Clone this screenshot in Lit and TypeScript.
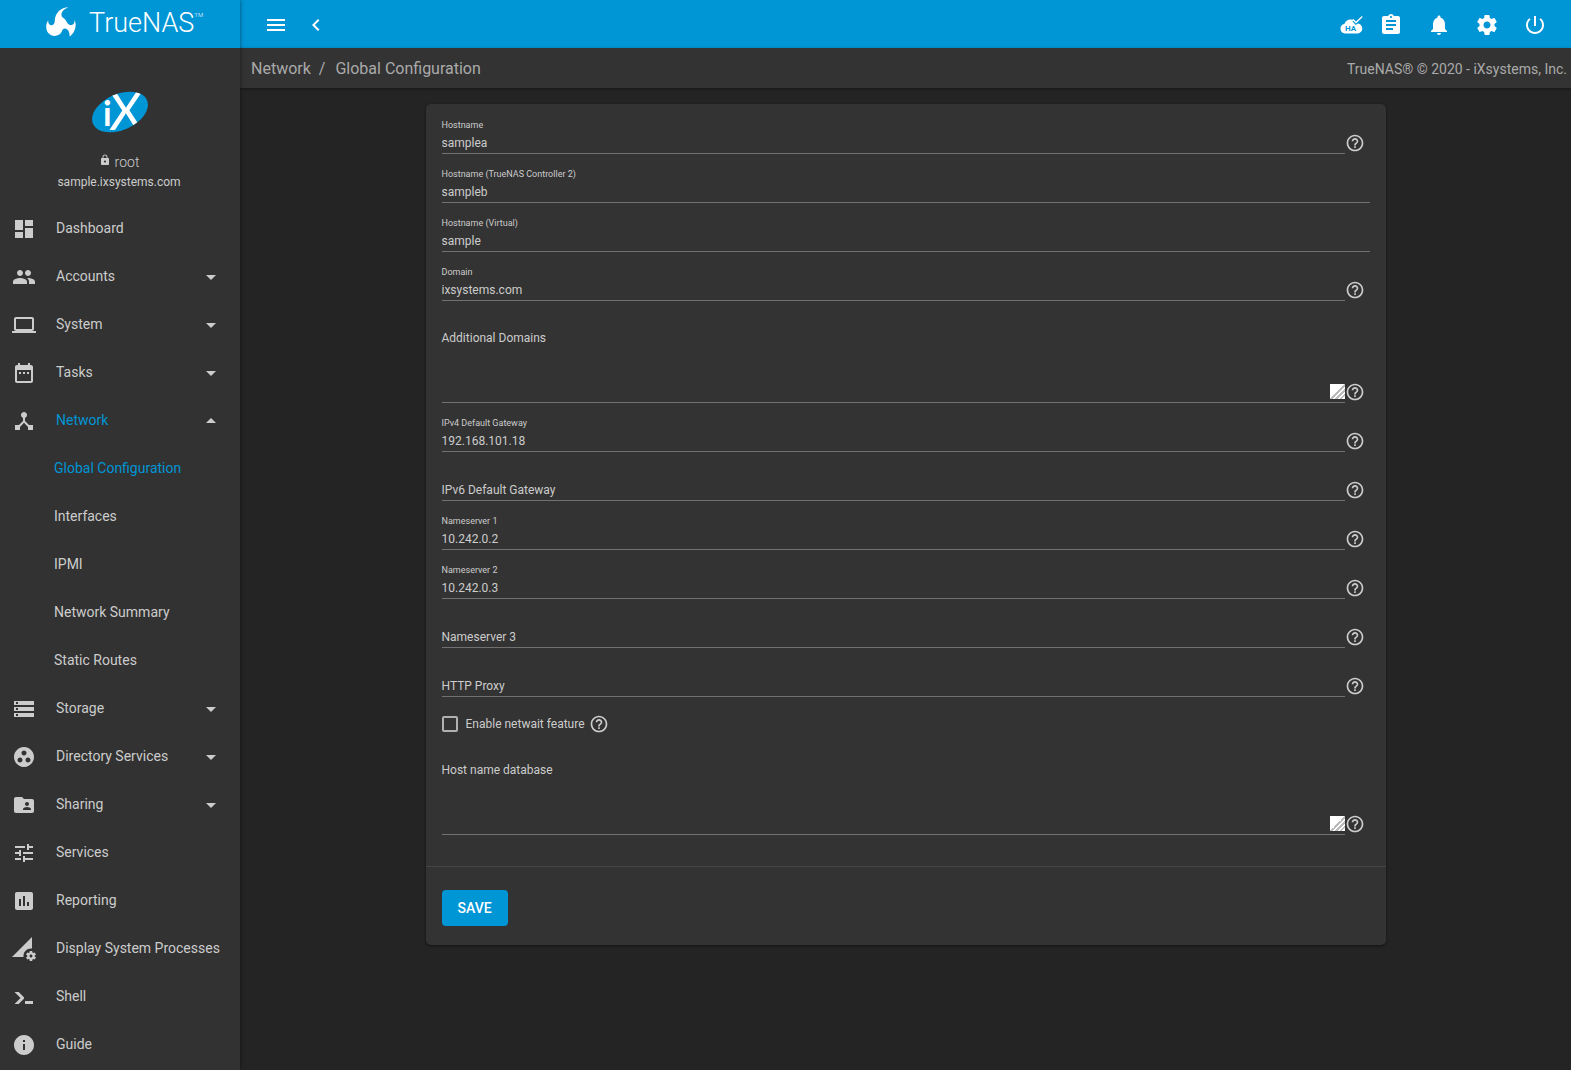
import { LitElement, html, svg, css, nothing } from "lit";
import { customElement, property } from "lit/decorators.js";

const ICONS: Record<string, string> = {
  menu: "M3 18h18v-2H3v2zm0-5h18v-2H3v2zm0-7v2h18V6H3z",
  chevron: "M15.41 7.41L14 6l-6 6 6 6 1.41-1.41L10.83 12z",
  assignment:
    "M19 3h-4.18C14.4 1.84 13.3 1 12 1c-1.3 0-2.4.84-2.82 2H5c-1.1 0-2 .9-2 2v14c0 1.1.9 2 2 2h14c1.1 0 2-.9 2-2V5c0-1.1-.9-2-2-2zm-7 0c.55 0 1 .45 1 1s-.45 1-1 1-1-.45-1-1 .45-1 1-1zm2 14H7v-2h7v2zm3-4H7v-2h10v2zm0-4H7V7h10v2z",
  bell: "M12 22c1.1 0 2-.9 2-2h-4c0 1.1.89 2 2 2zm6-6v-5c0-3.07-1.64-5.64-4.5-6.32V4c0-.83-.67-1.5-1.5-1.5s-1.5.67-1.5 1.5v.68C7.63 5.36 6 7.92 6 11v5l-2 2v1h16v-1l-2-2z",
  settings:
    "M19.43 12.98c.04-.32.07-.64.07-.98s-.03-.66-.07-.98l2.11-1.65c.19-.15.24-.42.12-.64l-2-3.46c-.12-.22-.39-.3-.61-.22l-2.49 1c-.52-.4-1.08-.73-1.69-.98l-.38-2.65C14.46 2.18 14.25 2 14 2h-4c-.25 0-.46.18-.49.42l-.38 2.65c-.61.25-1.17.59-1.69.98l-2.49-1c-.23-.09-.49 0-.61.22l-2 3.46c-.13.22-.07.49.12.64l2.11 1.65c-.04.32-.07.65-.07.98s.03.66.07.98l-2.11 1.65c-.19.15-.24.42-.12.64l2 3.46c.12.22.39.3.61.22l2.49-1c.52.4 1.08.73 1.69.98l.38 2.65c.03.24.24.42.49.42h4c.25 0 .46-.18.49-.42l.38-2.65c.61-.25 1.17-.59 1.69-.98l2.49 1c.23.09.49 0 .61-.22l2-3.46c.12-.22.07-.49-.12-.64l-2.11-1.65zM12 15.5c-1.93 0-3.5-1.57-3.5-3.5s1.57-3.5 3.5-3.5 3.5 1.57 3.5 3.5-1.57 3.5-3.5 3.5z",
  power:
    "M13 3h-2v10h2V3zm4.83 2.17l-1.42 1.42C17.99 7.86 19 9.81 19 12c0 3.87-3.13 7-7 7s-7-3.13-7-7c0-2.19 1.01-4.14 2.58-5.42L6.17 5.17C4.23 6.82 3 9.26 3 12c0 4.97 4.03 9 9 9s9-4.03 9-9c0-2.74-1.23-5.18-3.17-6.83z",
  lock: "M18 8h-1V6c0-2.76-2.24-5-5-5S7 3.24 7 6v2H6c-1.1 0-2 .9-2 2v10c0 1.1.9 2 2 2h12c1.1 0 2-.9 2-2V10c0-1.1-.9-2-2-2zm-6 9c-1.1 0-2-.9-2-2s.9-2 2-2 2 .9 2 2-.9 2-2 2zm3.1-9H8.9V6c0-1.71 1.39-3.1 3.1-3.1 1.71 0 3.1 1.39 3.1 3.1v2z",
  help: "M11 18h2v-2h-2v2zm1-16C6.48 2 2 6.48 2 12s4.48 10 10 10 10-4.48 10-10S17.52 2 12 2zm0 18c-4.41 0-8-3.59-8-8s3.59-8 8-8 8 3.59 8 8-3.59 8-8 8zm0-14c-2.21 0-4 1.79-4 4h2c0-1.1.9-2 2-2s2 .9 2 2c0 2-3 1.75-3 5h2c0-2.25 3-2.5 3-5 0-2.21-1.79-4-4-4z",
  down: "M7 10l5 5 5-5z",
  up: "M7 14l5-5 5 5z",
  dashboard: "M3 13h8V3H3v10zm0 8h8v-6H3v6zm10 0h8V11h-8v10zm0-18v6h8V3h-8z",
  group:
    "M16 11c1.66 0 2.99-1.34 2.99-3S17.66 5 16 5c-1.66 0-3 1.34-3 3s1.34 3 3 3zm-8 0c1.66 0 2.99-1.34 2.99-3S9.66 5 8 5C6.34 5 5 6.34 5 8s1.34 3 3 3zm0 2c-2.33 0-7 1.17-7 3.5V19h14v-2.5C15 14.17 10.33 13 8 13zm8 0c-.29 0-.62.02-.97.05 1.16.84 1.97 1.97 1.97 3.45V19h6v-2.5c0-2.33-4.67-3.5-7-3.5z",
  laptop:
    "M20 18c1.1 0 1.99-.9 1.99-2L22 6c0-1.1-.9-2-2-2H4c-1.1 0-2 .9-2 2v10c0 1.1.9 2 2 2H0v2h24v-2h-4zM4 6h16v10H4V6z",
  calendar:
    "M9 11H7v2h2v-2zm4 0h-2v2h2v-2zm4 0h-2v2h2v-2zm2-7h-1V2h-2v2H8V2H6v2H5c-1.11 0-1.99.9-1.99 2L3 20c0 1.1.89 2 2 2h14c1.1 0 2-.9 2-2V6c0-1.1-.9-2-2-2zm0 16H5V9h14v11z",
  hub: "M17 16l-4-4V8.82C14.16 8.4 15 7.3 15 6c0-1.66-1.34-3-3-3S9 4.34 9 6c0 1.3.84 2.4 2 2.82V12l-4 4H3v5h5v-3.05l4-4.2 4 4.2V21h5v-5h-4z",
  storage:
    "M2 20h20v-4H2v4zm2-3h2v2H4v-2zM2 4v4h20V4H2zm4 3H4V5h2v2zm-4 7h20v-4H2v4zm2-3h2v2H4v-2z",
  directory:
    "M12 2C6.48 2 2 6.48 2 12s4.48 10 10 10 10-4.48 10-10S17.52 2 12 2zM8 17.5c-1.38 0-2.5-1.12-2.5-2.5s1.12-2.5 2.5-2.5 2.5 1.12 2.5 2.5-1.12 2.5-2.5 2.5zM9.5 8c0-1.38 1.12-2.5 2.5-2.5s2.5 1.12 2.5 2.5-1.12 2.5-2.5 2.5S9.5 9.38 9.5 8zm6.5 9.5c-1.38 0-2.5-1.12-2.5-2.5s1.12-2.5 2.5-2.5 2.5 1.12 2.5 2.5-1.12 2.5-2.5 2.5z",
  sharing:
    "M20 6h-8l-2-2H4c-1.1 0-1.99.9-1.99 2L2 18c0 1.1.9 2 2 2h16c1.1 0 2-.9 2-2V8c0-1.1-.9-2-2-2zm-5 3c1.1 0 2 .9 2 2s-.9 2-2 2-2-.9-2-2 .9-2 2-2zm4 8h-8v-1c0-1.33 2.67-2 4-2s4 .67 4 2v1z",
  tune: "M3 17v2h6v-2H3zM3 5v2h10V5H3zm10 16v-2h8v-2h-8v-2h-2v6h2zM7 9v2H3v2h4v2h2V9H7zm14 4v-2H11v2h10zm-6-4h2V7h4V5h-4V3h-2v6z",
  chart:
    "M19 3H5c-1.1 0-2 .9-2 2v14c0 1.1.9 2 2 2h14c1.1 0 2-.9 2-2V5c0-1.1-.9-2-2-2zM9 17H7v-7h2v7zm4 0h-2V7h2v10zm4 0h-2v-4h2v4z",
  processes:
    "M18.99 11.5c.34 0 .67.03 1 .07L20 0 0 20h11.56c-.04-.33-.07-.66-.07-1 0-4.14 3.36-7.5 7.5-7.5zm3.71 7.99c.02-.16.04-.32.04-.49 0-.17-.01-.33-.04-.49l1.06-.83c.09-.08.12-.21.06-.32l-1-1.73c-.06-.11-.19-.15-.31-.11l-1.24.5c-.26-.2-.54-.37-.85-.49l-.19-1.32c-.01-.12-.12-.21-.24-.21h-2c-.12 0-.23.09-.25.21l-.19 1.32c-.3.13-.59.29-.85.49l-1.24-.5c-.11-.04-.24 0-.31.11l-1 1.73c-.06.11-.04.24.06.32l1.06.83c-.02.16-.03.32-.03.49 0 .17.01.33.03.49l-1.06.83c-.09.08-.12.21-.06.32l1 1.73c.06.11.19.15.31.11l1.24-.5c.26.2.54.37.85.49l.19 1.32c.02.12.12.21.25.21h2c.12 0 .23-.09.25-.21l.19-1.32c.3-.13.59-.29.84-.49l1.25.5c.11.04.24 0 .31-.11l1-1.73c.06-.11.03-.24-.06-.32l-1.07-.83zm-3.71 1.01c-.83 0-1.5-.67-1.5-1.5s.67-1.5 1.5-1.5 1.5.67 1.5 1.5-.67 1.5-1.5 1.5z",
  shell:
    "M13 19v-3h8v3h-8zM8.5 13L2.47 7h4.24l4.96 4.95c.58.59.58 1.55 0 2.12L6.74 19H2.5l6-6z",
  info: "M12 2C6.48 2 2 6.48 2 12s4.48 10 10 10 10-4.48 10-10S17.52 2 12 2zm1 15h-2v-6h2v6zm0-8h-2V7h2v2z",
};

const icon = (name: string, size = 24) => html`<svg
  class="icon"
  width=${size}
  height=${size}
  viewBox="0 0 24 24"
  fill="currentColor"
  aria-hidden="true"
>
  ${svg`<path d=${ICONS[name]}></path>`}
</svg>`;

const base = css`
  * {
    box-sizing: border-box;
  }
  .icon {
    display: block;
    flex: none;
  }
  button {
    font: inherit;
    color: inherit;
    background: none;
    border: 0;
    padding: 0;
    cursor: pointer;
  }
  a {
    color: inherit;
    text-decoration: none;
  }
`;

interface NavItem {
  label: string;
  icon: string;
  expandable?: boolean;
  children?: string[];
}

const NAV: NavItem[] = [
  { label: "Dashboard", icon: "dashboard" },
  { label: "Accounts", icon: "group", expandable: true },
  { label: "System", icon: "laptop", expandable: true },
  { label: "Tasks", icon: "calendar", expandable: true },
  {
    label: "Network",
    icon: "hub",
    expandable: true,
    children: ["Global Configuration", "Interfaces", "IPMI", "Network Summary", "Static Routes"],
  },
  { label: "Storage", icon: "storage", expandable: true },
  { label: "Directory Services", icon: "directory", expandable: true },
  { label: "Sharing", icon: "sharing", expandable: true },
  { label: "Services", icon: "tune" },
  { label: "Reporting", icon: "chart" },
  { label: "Display System Processes", icon: "processes" },
  { label: "Shell", icon: "shell" },
  { label: "Guide", icon: "info" },
];

@customElement("app-sidebar")
export class AppSidebar extends LitElement {
  static styles = [
    base,
    css`
      :host {
        display: block;
        background: #323232;
        color: #cccccc;
        box-shadow: 0 0 4px rgba(0, 0, 0, 0.5);
      }
      .brand {
        height: 48px;
        background: #0095d5;
        color: #fff;
        display: flex;
        align-items: center;
        gap: 12px;
        padding: 0 0 4px 46px;
      }
      .word {
        font-size: 27px;
        font-weight: 300;
        line-height: 32px;
        padding-top: 2px;
        display: flex;
      }
      .tm {
        font-size: 6px;
        line-height: 16px;
      }
      .profile {
        display: flex;
        flex-direction: column;
        align-items: center;
        padding: 32px 0 13px;
      }
      .mark {
        display: block;
      }
      .user {
        display: flex;
        align-items: center;
        gap: 4px;
        margin-top: 8px;
        padding-right: 2px;
        font-size: 14px;
        font-weight: 300;
        line-height: 20px;
      }
      .user .icon {
        margin-bottom: 4px;
      }
      .host {
        font-size: 12px;
        line-height: 20px;
        padding-right: 2px;
      }
      .item {
        height: 48px;
        display: flex;
        align-items: center;
        width: 100%;
        padding: 0 17px 0 12px;
        text-align: left;
        font-size: 14px;
        line-height: 20px;
      }
      .label {
        flex: 1;
        padding: 0 0 2px 20px;
        white-space: nowrap;
      }
      .sub {
        padding-left: 54px;
        padding-bottom: 2px;
      }
      .active {
        color: #0095d5;
      }
    `,
  ];

  render() {
    return html`
      <a class="brand" href="#" aria-label="TrueNAS">
        <svg width="31" height="30" viewBox="0 0 31 30" aria-hidden="true">
          <path
            fill="#fff"
            d="M22.5.2C15 .3 9 6 8.8 13.2c0 3.5-1.5 5.2-3.800 5C3 18 2 16.2 2.300 13.300-.5 17-.5 22.5 2.300 26c4 4.600 11.200 3.500 13.500-1.500.8-2.200 2-3.500 4.200-2.700 2.600.9 3.700 3.500 3.600 7.700 4-2.500 6.400-8.300 6-12.500-.1-1.600-.4-2.800-1.100-4.200.3 3-.8 4.900-2.900 5.300-3 .4-4.300-1.900-5.700-4.600-1.300-2.400-4-2.300-4.400-5.200C15.2 5 17.700 2 22.5.2z"
          ></path>
        </svg>
        <span class="word">TrueNAS<span class="tm">TM</span></span>
      </a>
      <div class="profile">
        <svg class="mark" width="58" height="64" viewBox="0 -10 58 64" role="img" aria-label="iX">
          <defs>
            <clipPath id="oval">
              <ellipse cx="29" cy="22" rx="29.5" ry="18" transform="rotate(-24 29 22)"></ellipse>
            </clipPath>
          </defs>
          <g clip-path="url(#oval)" font-family="Lato, sans-serif" fill="#fff">
            <rect width="58" height="44" fill="#0095d5"></rect>
            <text x="12" y="36" font-size="34" font-weight="700">i</text>
            <text x="18" y="40" font-size="52">X</text>
          </g>
        </svg>
        <div class="user">${icon("lock", 12)}<span>root</span></div>
        <div class="host">sample.ixsystems.com</div>
      </div>
      <nav>
        ${NAV.map(
          (n) => html`
            ${n.expandable
              ? html`<button class="item" type="button" aria-expanded=${n.children ? "true" : "false"}>
                  ${icon(n.icon)}<span class="label ${n.children ? "active" : ""}">${n.label}</span>
                  ${icon(n.children ? "up" : "down")}
                </button>`
              : html`<a class="item" href="#">${icon(n.icon)}<span class="label">${n.label}</span></a>`}
            ${(n.children ?? []).map(
              (c, i) => html`<a class="item sub ${i === 0 ? "active" : ""}" href="#">${c}</a>`
            )}
          `
        )}
      </nav>
    `;
  }
}

@customElement("app-topbar")
export class AppTopbar extends LitElement {
  static styles = [
    base,
    css`
      :host {
        display: block;
      }
      .bar {
        height: 48px;
        display: flex;
        align-items: center;
        justify-content: space-between;
        background: #0095d5;
        color: #fff;
        padding: 2px 12px 0 16px;
      }
      .group {
        display: flex;
        align-items: center;
      }
      .btn {
        display: grid;
        place-items: center;
        width: 40px;
        height: 40px;
      }
      .right .btn {
        width: 48px;
      }
      .right .ha {
        width: 32px;
      }
      .crumbs {
        height: 40px;
        display: flex;
        align-items: center;
        justify-content: space-between;
        background: #333;
        color: #aaa;
        padding: 1px 4px 0 11px;
        font-size: 14px;
        line-height: 20px;
        box-shadow: 0 1px 3px rgba(0, 0, 0, 0.4);
      }
      .path {
        display: flex;
        gap: 8px;
        padding-top: 1px;
        font-size: 16px;
      }
      .last {
        padding-left: 2px;
      }
    `,
  ];

  render() {
    return html`
      <header class="bar">
        <div class="group">
          <button class="btn" type="button" aria-label="Toggle menu">${icon("menu")}</button>
          <button class="btn" type="button" aria-label="Collapse">${icon("chevron")}</button>
        </div>
        <div class="group right">
          <button class="btn ha" type="button" aria-label="High availability">
            <svg width="23" height="20" viewBox="0 0 23 20" aria-hidden="true">
              <path
                fill="#fff"
                d="M5 18.500a4.800 4.800 0 0 1-.6-9.500A6.800 6.800 0 0 1 17 8.500a5 5 0 0 1 .6 10z"
              ></path>
              <path fill="none" stroke="#0095d5" stroke-width="3" d="M13.500 5.500l2.500 2.500L22 2.500"></path>
              <path fill="none" stroke="#fff" stroke-width="1.300" d="M13 4.500l3 3L22.300 1.500"></path>
              <text x="5" y="16" font-size="8" font-weight="700" fill="#0095d5">HA</text>
            </svg>
          </button>
          <button class="btn" type="button" aria-label="Task manager">${icon("assignment")}</button>
          <button class="btn" type="button" aria-label="Notifications">${icon("bell")}</button>
          <button class="btn" type="button" aria-label="Settings">${icon("settings")}</button>
          <button class="btn" type="button" aria-label="Power">${icon("power")}</button>
        </div>
      </header>
      <div class="crumbs">
        <nav class="path">
          <a href="#">Network</a><span>/</span><a class="last" href="#">Global Configuration</a>
        </nav>
        <span>TrueNAS® © 2020 - iXsystems, Inc.</span>
      </div>
    `;
  }
}

@customElement("form-field")
export class FormField extends LitElement {
  @property() label = "";
  @property() value = "";
  @property({ type: Boolean }) help = false;
  @property({ type: Boolean }) multiline = false;

  static styles = [
    base,
    css`
      :host {
        display: flex;
        align-items: flex-end;
      }
      .field {
        flex: 1;
        display: grid;
        grid-template-rows: 12px 18px;
        row-gap: 3px;
        padding-bottom: 1px;
        border-bottom: 1px solid #707070;
      }
      .area {
        grid-template-rows: 70px;
        padding: 14px 0 3px;
      }
      label {
        grid-area: 1 / 1;
        font-size: 9px;
        line-height: 12px;
      }
      .resting {
        grid-area: 2 / 1;
        font-size: 12px;
        line-height: 18px;
        pointer-events: none;
      }
      .area .resting {
        grid-area: 1 / 1;
      }
      input,
      textarea {
        grid-area: 2 / 1;
        width: 100%;
        min-width: 0;
        margin: 0;
        padding: 0;
        border: 0;
        outline: 0;
        background: none;
        color: inherit;
        font: inherit;
        font-size: 12px;
        line-height: 18px;
      }
      textarea {
        grid-area: 1 / 1;
        height: 70px;
        resize: vertical;
      }
      textarea::-webkit-scrollbar {
        width: 15px;
        height: 15px;
      }
      textarea::-webkit-resizer {
        background: linear-gradient(
          135deg,
          #fff 50%,
          #bbb 50%,
          #bbb 58%,
          #fff 58%,
          #fff 66%,
          #bbb 66%,
          #bbb 74%,
          #fff 74%,
          #fff 82%,
          #bbb 82%,
          #bbb 90%,
          #fff 90%
        );
      }
      .help {
        margin: 0 5px 1px 0;
      }
    `,
  ];

  render() {
    const resting = this.multiline || !this.value;
    return html`
      <div class="field ${this.multiline ? "area" : ""}">
        ${this.multiline
          ? html`<textarea id="control"></textarea>`
          : html`<input id="control" type="text" .value=${this.value} />`}
        <label class=${resting ? "resting" : ""} for="control">${this.label}</label>
      </div>
      ${this.help
        ? html`<button class="help" type="button" aria-label="Help: ${this.label}">${icon("help", 20)}</button>`
        : nothing}
    `;
  }
}

@customElement("app-root")
export class AppRoot extends LitElement {
  static styles = [
    base,
    css`
      :host {
        display: grid;
        grid-template-columns: 240px minmax(0, 1fr);
        min-height: 100vh;
        background: #242424;
        color: #cccccc;
        font-family: Roboto, sans-serif;
        font-size: 14px;
      }
      app-sidebar {
        z-index: 1;
      }
      main {
        padding: 16px;
      }
      .card {
        max-width: 960px;
        margin: 0 auto;
        background: #333;
        border-radius: 5px;
        box-shadow: 0 1px 3px rgba(0, 0, 0, 0.5);
      }
      .fields {
        display: grid;
        gap: 14px;
        padding: 15px 16px 31px;
      }
      .check {
        display: flex;
        align-items: center;
        gap: 4px;
        padding-top: 4px;
        height: 22px;
        font-size: 12px;
        line-height: 18px;
      }
      .check label {
        display: flex;
        align-items: center;
        gap: 8px;
      }
      .check input {
        appearance: none;
        width: 16px;
        height: 16px;
        margin: 0;
        border: 2px solid #b0b0b0;
        border-radius: 2px;
      }
      .check input:checked {
        background: #0095d5;
      }
      .actions {
        border-top: 1px solid #464646;
        padding: 23px 16px 19px;
      }
      .save {
        display: block;
        height: 36px;
        padding: 0 16px;
        border-radius: 4px;
        background: #0095d5;
        color: #fff;
        font-weight: 500;
      }
    `,
  ];

  render() {
    return html`
      <app-sidebar></app-sidebar>
      <div>
        <app-topbar></app-topbar>
        <main>
          <form class="card" @submit=${(e: Event) => e.preventDefault()}>
            <div class="fields">
              <form-field label="Hostname" value="samplea" help></form-field>
              <form-field label="Hostname (TrueNAS Controller 2)" value="sampleb"></form-field>
              <form-field label="Hostname (Virtual)" value="sample"></form-field>
              <form-field label="Domain" value="ixsystems.com" help></form-field>
              <form-field label="Additional Domains" multiline help></form-field>
              <form-field label="IPv4 Default Gateway" value="192.168.101.18" help></form-field>
              <form-field label="IPv6 Default Gateway" help></form-field>
              <form-field label="Nameserver 1" value="10.242.0.2" help></form-field>
              <form-field label="Nameserver 2" value="10.242.0.3" help></form-field>
              <form-field label="Nameserver 3" help></form-field>
              <form-field label="HTTP Proxy" help></form-field>
              <div class="check">
                <label><input type="checkbox" />Enable netwait feature</label>
                <button type="button" aria-label="Help: Enable netwait feature">${icon("help", 20)}</button>
              </div>
              <form-field label="Host name database" multiline help></form-field>
            </div>
            <div class="actions">
              <button class="save" type="submit">SAVE</button>
            </div>
          </form>
        </main>
      </div>
    `;
  }
}
